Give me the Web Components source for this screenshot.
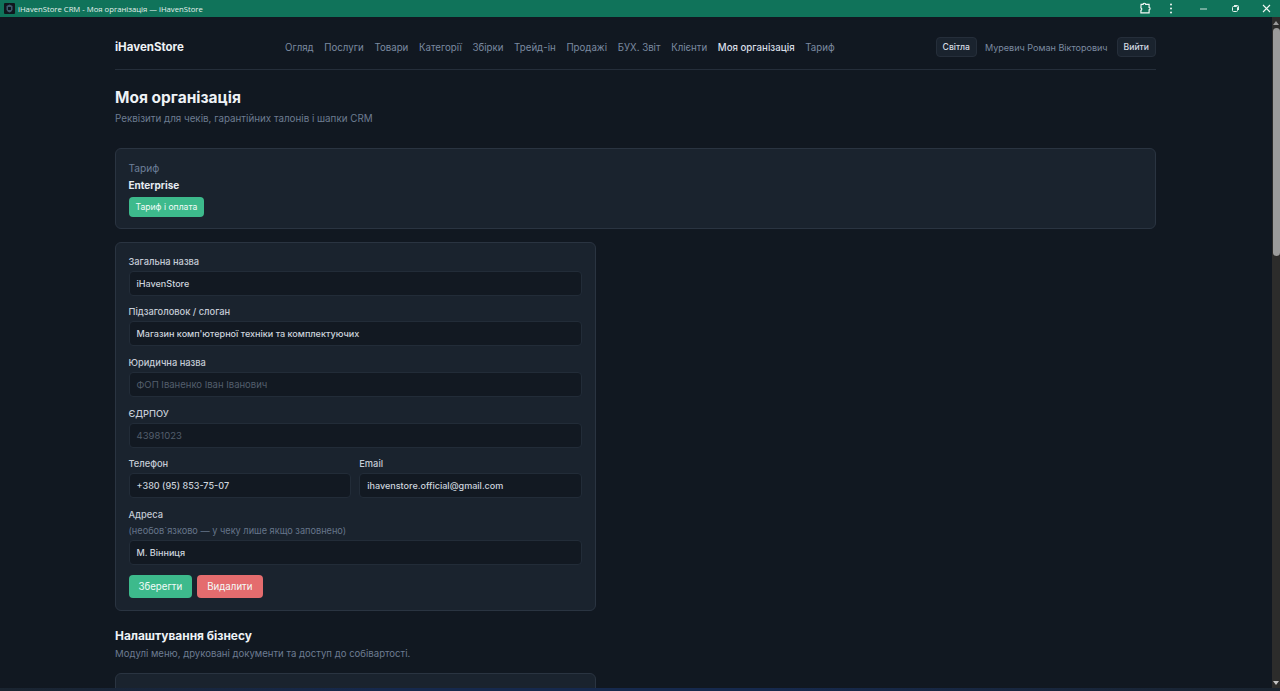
<!DOCTYPE html>
<html lang="uk">
<head>
<meta charset="utf-8">
<title>iHavenStore CRM - Моя організація</title>
<style>
  html, body { margin: 0; height: 100%; overflow: hidden; background: #111821; }
  body { font-family: "Inter", "Noto Sans", sans-serif; color: #e6ebf1; }
</style>
</head>
<body>
<app-window>
  <crm-nav></crm-nav>
  <page-head heading="Моя організація" sub="Реквізити для чеків, гарантійних талонів і шапки CRM"></page-head>
  <plan-card></plan-card>
  <org-form></org-form>
  <section-head heading="Налаштування бізнесу" sub="Модулі меню, друковані документи та доступ до собівартості."></section-head>
  <crm-card class="stub"></crm-card>
</app-window>

<script>
class AppWindow extends HTMLElement {
  constructor() {
    super();
    const shadow = this.attachShadow({ mode: 'open' });
    shadow.innerHTML = `
      <style>
        :host { display: flex; flex-direction: column; height: 691px; overflow: hidden; }
        .titlebar {
          flex: none;
          height: 17px;
          background: #10735a;
          display: flex;
          align-items: center;
          color: #e4f1ec;
          font: 7.7px "Open Sans", sans-serif;
        }
        .favicon { width: 11px; height: 11px; margin: 0 3px 0 4px; flex: none; }
        .title { flex: 1; white-space: nowrap; }
        .controls { display: flex; align-items: center; height: 17px; }
        .controls svg { display: block; }
        .body { flex: 1; display: flex; min-height: 0; }
        .scroll { flex: 1; min-width: 0; overflow: hidden; padding: 0 116px 0 115px; box-sizing: border-box; }
        .scrollbar {
          flex: none;
          width: 8px;
          background: #2c2c2b;
          display: flex;
          flex-direction: column;
          align-items: center;
        }
        .arrow-up { border: 3px solid transparent; border-top: 0; border-bottom: 4px solid #9b9b9b; margin-top: 4px; }
        .arrow-down { border: 3px solid transparent; border-bottom: 0; border-top: 4px solid #c4c4c4; margin-bottom: 3px; }
        .thumb { width: 7px; height: 228px; margin-top: 3px; background: #9b9b9b; border-radius: 4px; }
        .track { flex: 1; }
        .taskline { flex: none; height: 3px; background: linear-gradient(90deg, #1a2430, #16294d 30%, #16294d 60%, #1a2430); }
      </style>
      <div class="titlebar">
        <svg class="favicon" viewBox="0 0 11 11">
          <rect width="11" height="11" rx="1" fill="#10161d"/>
          <path d="M5.5 1.5 8.5 3v3.2c0 1.5-1.4 2.6-3 3.3-1.6-.7-3-1.8-3-3.3V3z" fill="#3d5a6c"/>
          <path d="M4 4h3v3H4z" fill="#0f1820"/>
        </svg>
        <span class="title">iHavenStore CRM - Моя організація — iHavenStore</span>
        <div class="controls">
          <svg width="13" height="13" viewBox="0 0 13 13" style="margin-right:17px" fill="none" stroke="#f2f7f5" stroke-width="1.2">
            <path d="M2.5 2.5h2c0-1.4 2.6-1.4 2.6 0h3.4v3c1.3 0 1.3 2.6 0 2.6v3h-8.2V8.6c1.1 0 1.1-2.4 0-2.4z" transform="translate(-.4 -.2)"/>
          </svg>
          <svg width="4" height="11" viewBox="0 0 4 11" style="margin-right:26px" fill="#f2f7f5">
            <circle cx="2" cy="1.6" r="1"/><circle cx="2" cy="5.5" r="1"/><circle cx="2" cy="9.4" r="1"/>
          </svg>
          <svg width="9" height="9" viewBox="0 0 9 9" style="margin-right:23px" stroke="#cfe3dc" stroke-width="1">
            <path d="M1 5h7"/>
          </svg>
          <svg width="9" height="9" viewBox="0 0 9 9" style="margin-right:22px" fill="none" stroke="#e4f1ec" stroke-width="1">
            <rect x="1.5" y="2.5" width="5" height="5" rx="1"/><path d="M3 1.5h3.5a1 1 0 0 1 1 1V6"/>
          </svg>
          <svg width="9" height="9" viewBox="0 0 9 9" style="margin-right:9px" stroke="#f2f7f5" stroke-width="1.1">
            <path d="M1 1l7 7M8 1l-7 7"/>
          </svg>
        </div>
      </div>
      <div class="body">
        <div class="scroll"><slot></slot></div>
        <div class="scrollbar">
          <div class="arrow-up"></div>
          <div class="thumb"></div>
          <div class="track"></div>
          <div class="arrow-down"></div>
        </div>
      </div>
      <div class="taskline"></div>
    `;
  }
}
customElements.define('app-window', AppWindow);

class CrmNav extends HTMLElement {
  constructor() {
    super();
    const shadow = this.attachShadow({ mode: 'open' });
    const links = ['Огляд', 'Послуги', 'Товари', 'Категорії', 'Збірки', 'Трейд-ін', 'Продажі', 'БУХ. Звіт', 'Клієнти', 'Моя організація', 'Тариф'];
    shadow.innerHTML = `
      <style>
        :host {
          display: flex;
          align-items: center;
          box-sizing: border-box;
          height: 53px;
          padding-top: 8px;
          border-bottom: 1px solid #252e3a;
          font-size: 9.7px;
          color: #7b8aa0;
        }
        .brand { width: 170px; flex: none; font-size: 11.5px; font-weight: 700; color: #eef2f6; }
        .links { display: flex; gap: 10.65px; flex: 1; }
        .links span.on { color: #d8dee6; font-weight: 500; }
        .right { display: flex; align-items: center; gap: 8px; font-size: 9.05px; }
        .right .btn:last-child { margin-left: 1px; }
        .btn {
          height: 18px;
          padding: 0 6px;
          display: flex;
          align-items: center;
          background: #1a232e;
          border: 1px solid #252e3a;
          border-radius: 4px;
          color: #d5dbe3;
          font-size: 8.6px;
          font-weight: 500;
        }
      </style>
      <div class="brand">iHavenStore</div>
      <div class="links">${links.map(l => `<span class="${l === 'Моя організація' ? 'on' : ''}">${l}</span>`).join('')}</div>
      <div class="right">
        <div class="btn">Світла</div>
        <span>Муревич Роман Вікторович</span>
        <div class="btn">Вийти</div>
      </div>
    `;
  }
}
customElements.define('crm-nav', CrmNav);

class PageHead extends HTMLElement {
  constructor() {
    super();
    this.attachShadow({ mode: 'open' }).innerHTML = `
      <style>
        :host { display: block; padding-top: 18px; height: 60px; }
        h1 { margin: 0; font-size: 15.5px; line-height: 20px; font-weight: 700; color: #eef2f6; }
        p { margin: 4px 0 0; font-size: 9.8px; line-height: 14px; color: #6d7c91; }
      </style>
      <h1>${this.getAttribute('heading')}</h1>
      <p>${this.getAttribute('sub')}</p>
    `;
  }
}
customElements.define('page-head', PageHead);

class CrmCard extends HTMLElement {
  constructor() {
    super();
    this.attachShadow({ mode: 'open' }).innerHTML = `
      <style>
        :host {
          display: block;
          box-sizing: border-box;
          background: #1a232e;
          border: 1px solid #2a3441;
          border-radius: 6px;
          padding: 12px 13px 12px 12.5px;
        }
        :host(.stub) { height: 60px; width: 481px; }
      </style>
      <slot></slot>
    `;
  }
}
customElements.define('crm-card', CrmCard);

class CrmButton extends HTMLElement {
  constructor() {
    super();
    this.attachShadow({ mode: 'open' }).innerHTML = `
      <style>
        :host {
          display: inline-flex;
          align-items: center;
          justify-content: center;
          box-sizing: border-box;
          height: 23px;
          padding: 0 10px;
          border-radius: 4px;
          background: #3dba8c;
          color: #f3fbf8;
          font-size: 9.7px;
          font-weight: 400;
        }
        :host(.small) { height: 20px; padding: 0 7px; font-size: 8.6px; }
        :host(.danger) { background: #e46c6e; }
      </style>
      <slot></slot>
    `;
  }
}
customElements.define('crm-button', CrmButton);

class PlanCard extends HTMLElement {
  constructor() {
    super();
    this.attachShadow({ mode: 'open' }).innerHTML = `
      <style>
        :host { display: block; margin-top: 0; }
        crm-card { height: 81px; padding-top: 12px; }
        .label { font-size: 10.2px; line-height: 14px; color: #6d7f99; }
        .plan { font-size: 10px; line-height: 14px; margin-top: 3px; font-weight: 700; color: #e6ebf1; }
        .row { display: flex; margin-top: 5px; }
      </style>
      <crm-card>
        <div class="label">Тариф</div>
        <div class="plan">Enterprise</div>
        <div class="row"><crm-button class="small">Тариф і оплата</crm-button></div>
      </crm-card>
    `;
  }
}
customElements.define('plan-card', PlanCard);

class FormField extends HTMLElement {
  constructor() {
    super();
    const value = this.getAttribute('value');
    const hint = this.getAttribute('hint');
    this.attachShadow({ mode: 'open' }).innerHTML = `
      <style>
        :host { display: block; min-width: 0; }
        label { display: block; height: 13px; font-size: 9.3px; line-height: 13px; font-weight: 500; color: #c5ccd6; margin-bottom: 3px; }
        .hint { height: 13px; font-size: 9.2px; line-height: 13px; color: #66758a; margin: 3px 0 3px; }
        .input {
          box-sizing: border-box;
          height: 25px;
          padding: 0 7px;
          display: flex;
          align-items: center;
          background: #121922;
          border: 1px solid #222c38;
          border-radius: 4px;
          font-size: 9.05px;
          font-weight: 500;
          color: #cdd4dd;
          white-space: nowrap;
        }
        .input.empty { color: #525e6c; font-size: 9.5px; font-weight: 400; }
      </style>
      <label>${this.getAttribute('label')}</label>
      ${hint ? `<div class="hint">${hint}</div>` : ''}
      <div class="input ${value ? '' : 'empty'}">${value || this.getAttribute('placeholder') || ''}</div>
    `;
  }
}
customElements.define('form-field', FormField);

class OrgForm extends HTMLElement {
  constructor() {
    super();
    this.attachShadow({ mode: 'open' }).innerHTML = `
      <style>
        :host { display: block; width: 481px; margin-top: 13px; }
        crm-card { height: 369px; padding-top: 11.7px; }
        .fields { display: flex; flex-direction: column; gap: 9.65px; }
        .pair { display: grid; grid-template-columns: 1fr 1fr; gap: 8px; }
        .actions { display: flex; gap: 5px; margin-top: 10px; }
      </style>
      <crm-card>
        <div class="fields">
          <form-field label="Загальна назва" value="iHavenStore"></form-field>
          <form-field label="Підзаголовок / слоган" value="Магазин комп'ютерної техніки та комплектуючих"></form-field>
          <form-field label="Юридична назва" placeholder="ФОП Іваненко Іван Іванович"></form-field>
          <form-field label="ЄДРПОУ" placeholder="43981023"></form-field>
          <div class="pair">
            <form-field label="Телефон" value="+380 (95) 853-75-07"></form-field>
            <form-field label="Email" value="ihavenstore.official@gmail.com"></form-field>
          </div>
          <form-field label="Адреса" hint="(необов&#96;язково — у чеку лише якщо заповнено)" value="М. Вінниця"></form-field>
        </div>
        <div class="actions">
          <crm-button>Зберегти</crm-button>
          <crm-button class="danger">Видалити</crm-button>
        </div>
      </crm-card>
    `;
  }
}
customElements.define('org-form', OrgForm);

class SectionHead extends HTMLElement {
  constructor() {
    super();
    this.attachShadow({ mode: 'open' }).innerHTML = `
      <style>
        :host { display: block; padding-top: 17px; height: 45px; margin-bottom: 0; }
        h2 { margin: 0; font-size: 11.9px; line-height: 15px; font-weight: 700; color: #eef2f6; }
        p { margin: 4px 0 0; font-size: 9.6px; line-height: 14px; color: #6d7c91; }
      </style>
      <h2>${this.getAttribute('heading')}</h2>
      <p>${this.getAttribute('sub')}</p>
    `;
  }
}
customElements.define('section-head', SectionHead);
</script>
</body>
</html>
